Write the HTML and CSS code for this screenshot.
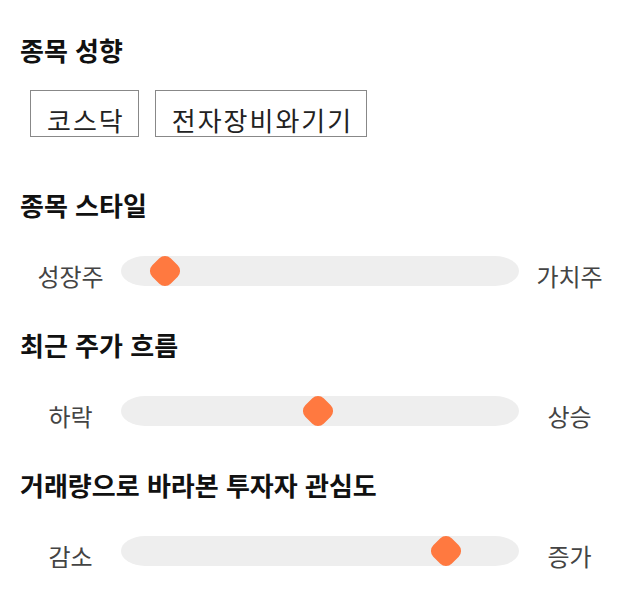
FILE: index.html
```html
<!DOCTYPE html>
<html lang="ko">
<head>
  <meta charset="UTF-8" />
  <meta name="viewport" content="width=device-width, initial-scale=1.0"/>
  <title>종목 성향</title>
  <link rel="stylesheet" href="styles.css">
</head>
<body>
  <div class="panel">
    <section class="group group-tags">
      <h2>종목 성향</h2>
      <div class="tags">
        <button class="tag">코스닥</button>
        <button class="tag">전자장비와기기</button>
      </div>
    </section>

    <section class="group">
      <h2>종목 스타일</h2>
      <div class="slider-row">
        <span class="side">성장주</span>
        <div class="track"><span class="thumb" style="left: 11%"></span></div>
        <span class="side">가치주</span>
      </div>
    </section>

    <section class="group">
      <h2>최근 주가 흐름</h2>
      <div class="slider-row">
        <span class="side">하락</span>
        <div class="track"><span class="thumb" style="left: 49.5%"></span></div>
        <span class="side">상승</span>
      </div>
    </section>

    <section class="group">
      <h2>거래량으로 바라본 투자자 관심도</h2>
      <div class="slider-row">
        <span class="side">감소</span>
        <div class="track"><span class="thumb" style="left: 81.7%"></span></div>
        <span class="side">증가</span>
      </div>
    </section>
  </div>
</body>
</html>
```

FILE: styles.css
```css
body { margin: 0; background: #fff; font-family: "Noto Sans CJK KR", "Noto Sans", sans-serif; color: #222; }
.panel { padding: 35px 20px 20px; display: flex; flex-direction: column; gap: 39px; }
.group h2 { margin: 0 0 36px 0; font-size: 26px; line-height: 30px; font-weight: 700; color: #111; }
.group-tags { margin-bottom: 14px; }
.group-tags h2 { margin-bottom: 25px; }

.tags { display: flex; gap: 16px; padding-left: 10px; }
.tag { height: 47px; padding: 12px 13px 0 16px; border: 1px solid #888; background: #fff; color: #222; font-family: inherit; font-size: 26px; line-height: 30px; letter-spacing: 2px; }

.slider-row { display: flex; align-items: flex-start; }
.side { width: 101px; margin-top: 5px; text-align: center; font-size: 24px; line-height: 30px; color: #444; }
.track { flex: 1; position: relative; height: 30px; background: #eee; border-radius: 24px / 15px; }
.thumb { position: absolute; top: 50%; width: 26px; height: 26px; background: #ff7940; border-radius: 8px; transform: translate(-50%, -50%) rotate(45deg); }
```
